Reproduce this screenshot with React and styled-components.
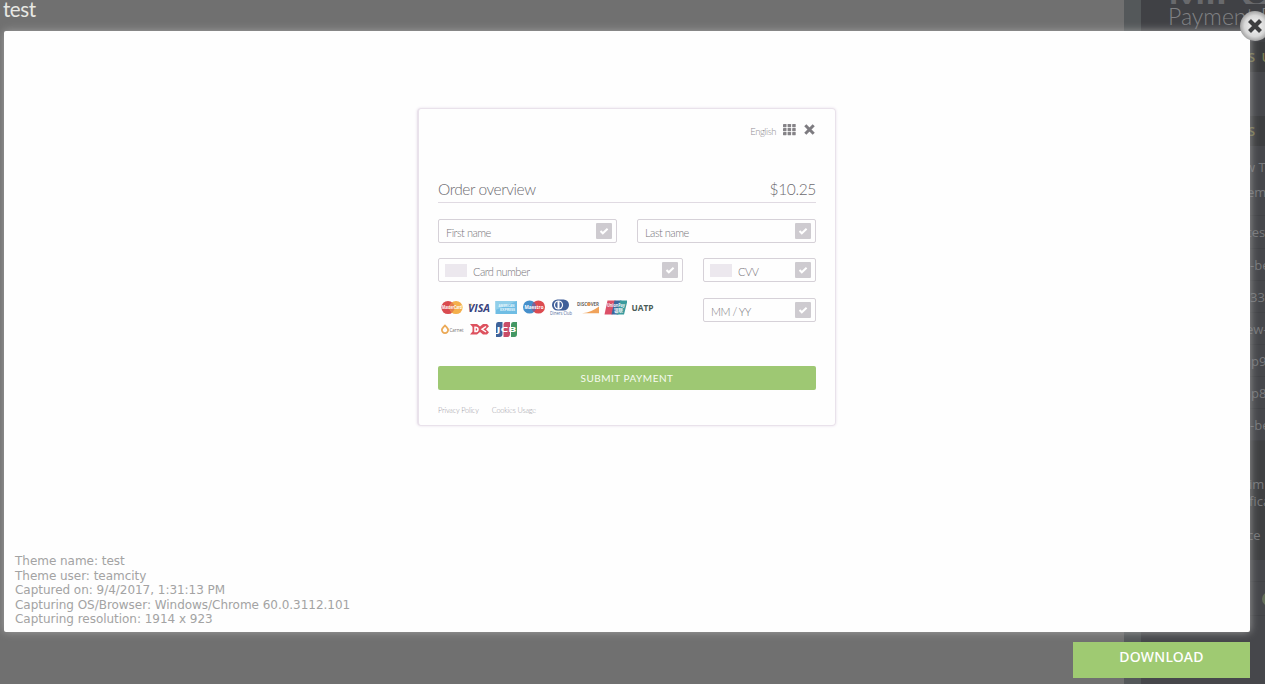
import React from "react";
import styled, { createGlobalStyle } from "styled-components";

const GlobalStyle = createGlobalStyle`
  * { box-sizing: border-box; }
  html, body { margin: 0; padding: 0; height: 684px; overflow: hidden; background: #707070; }
`;

const thin = '"Lato", "Open Sans", sans-serif';

const Page = styled.div`
  position: relative;
  display: flex;
  width: 1265px;
  height: 684px;
  overflow: hidden;
`;
const Backdrop = styled.div`
  flex: 1;
  background: #707070;
`;
const Gutter = styled.div`
  width: 17px;
  background: #54585a;
`;
const Sidebar = styled.aside`
  width: 124px;
  height: 684px;
  overflow: hidden;
  background: #46474b;
  color: #77787a;
  font: 13px/18px "Open Sans", sans-serif;
  white-space: nowrap;
`;
const Brand = styled.div`
  height: 42px;
  padding-left: 27px;
  background: #404145;
  font-family: ${thin};
  font-weight: 300;
`;
const BrandName = styled.div`
  height: 4px;
  display: flex;
  align-items: flex-end;
  font: 700 40px/22px "Lato", sans-serif;
  color: #68696c;
  overflow: hidden;
`;
const BrandLine = styled.div`
  font-size: 23px;
  line-height: 25px;
  color: #808184;
`;
const SideRow = styled.div`
  display: flex;
  align-items: center;
  height: ${(p) => p.$h}px;
  padding-left: ${(p) => p.$x ?? 107}px;
  background: ${(p) => p.$bg || "transparent"};
  color: ${(p) => (p.$accent ? "#7d7b50" : "inherit")};
  font-weight: ${(p) => (p.$accent ? 600 : 400)};
  word-spacing: ${(p) => (p.$accent ? "3px" : 0)};
  border-bottom: 1px solid ${(p) => (p.$line ? "#414246" : "transparent")};
`;
const Dot = styled.span`
  flex: none;
  width: 14px;
  height: 14px;
  border-radius: 50%;
  background: #65705a;
`;

const Title = styled.h1`
  position: absolute;
  left: 3px;
  top: -4px;
  margin: 0;
  font: 400 20.5px/26px ${thin};
  letter-spacing: -0.45px;
  color: #e8e8e4;
`;
const Lightbox = styled.section`
  position: absolute;
  left: 4px;
  top: 31px;
  width: 1246px;
  height: 601px;
  padding: 77px 10px 5px 413px;
  display: flex;
  flex-direction: column;
  justify-content: space-between;
  background: #fefefe;
  border-radius: 2px;
  box-shadow: 0 0 9px #a0a0a0;
`;
const CloseButton = styled.button`
  position: absolute;
  left: 1240px;
  top: 11px;
  width: 30px;
  height: 30px;
  padding: 0;
  border: 0;
  background: none;
  svg { display: block; }
`;
const Download = styled.button`
  position: absolute;
  left: 1073px;
  top: 642px;
  width: 177px;
  height: 36px;
  padding: 0 0 6px;
  border: 0;
  background: #9fca72;
  color: #fff;
  font: 500 14px/18px "Noto Sans", "Open Sans", sans-serif;
  letter-spacing: 0.25px;
`;

const Card = styled.form`
  width: 419px;
  height: 318px;
  padding: 0 19px;
  display: flex;
  flex-direction: column;
  border: 1px solid #e9e2eb;
  border-left-width: 2px;
  border-radius: 4px;
  box-shadow: 0 0 3px #e9e0ec;
  font-family: ${thin};
  font-weight: 300;
  color: #77757a;
`;
const Tools = styled.div`
  display: flex;
  justify-content: flex-end;
  align-items: center;
  gap: 7px;
  height: 41px;
  font-size: 9.5px;
  color: #8f8d92;
  svg { display: block; }
  span { padding-top: 3px; letter-spacing: -0.45px; }
`;
const Overview = styled.div`
  display: flex;
  justify-content: space-between;
  align-items: flex-end;
  height: 53px;
  margin-bottom: 16px;
  padding-bottom: 2px;
  border-bottom: 1px solid #e0dae2;
  font-size: 15.5px;
  line-height: 21px;
  color: #6d6b70;
`;
const OverviewLabel = styled.span`
  letter-spacing: -0.45px;
`;
const Amount = styled.span`
  letter-spacing: -0.35px;
`;
const Fields = styled.div`
  display: grid;
  grid-template-columns: ${(p) => p.$cols};
  column-gap: 20px;
  row-gap: 16px;
  margin-bottom: ${(p) => p.$mb || 0}px;
`;
const FieldBox = styled.label`
  display: flex;
  align-items: center;
  height: 24px;
  padding: 0 4px 0 ${(p) => (p.$swatch ? 6 : 7)}px;
  border: 1px solid #d6d1d8;
  border-radius: 2px;
  font-size: 11px;
  line-height: 14px;
  svg { margin-left: auto; }
`;
const Swatch = styled.span`
  width: 22px;
  height: 13px;
  margin-right: 6px;
  background: #ece8ee;
`;
const FieldText = styled.span`
  padding-top: 3px;
  letter-spacing: -0.5px;
`;
const Brands = styled.div`
  display: grid;
  grid-template-columns: repeat(8, 27.3px);
  grid-auto-rows: 21.5px;
  justify-items: center;
  height: 43px;
  svg { display: block; }
`;
const Submit = styled.button`
  height: 24px;
  margin-top: 25px;
  padding: 0 0 1px;
  flex-shrink: 0;
  border: 0;
  border-radius: 2px;
  background: #9ec873;
  color: #f7fbf1;
  font: 400 10px/14px ${thin};
  letter-spacing: 0.5px;
`;
const Legal = styled.div`
  display: flex;
  gap: 13px;
  margin-top: 16px;
  font-size: 7.3px;
  line-height: 10px;
  color: #9b999e;
  letter-spacing: -0.15px;
`;
const Info = styled.div`
  margin-left: -402px;
  font: 12px/14.6px "DejaVu Sans", sans-serif;
  letter-spacing: -0.03px;
  color: #a3a3a3;
`;

const Check = () => (
  <svg width="16" height="16" viewBox="0 0 16 16">
    <rect width="16" height="16" rx="1" fill="#cecbd0" />
    <path d="M4.5 8l2.3 2.3 4.8-4.6" fill="none" stroke="#fff" strokeWidth="2" />
  </svg>
);

const Field = ({ label, swatch }) => (
  <FieldBox $swatch={swatch}>
    {swatch && <Swatch />}
    <FieldText>{label}</FieldText>
    <Check />
  </FieldBox>
);

const T = ({ children, ...p }) => (
  <text textAnchor="middle" fontFamily="Open Sans, Noto Sans CJK SC, sans-serif" fontWeight="700" lengthAdjust="spacingAndGlyphs" {...p}>
    {children}
  </text>
);
const Logo = ({ children }) => (
  <svg width="24" height="18" viewBox="0 0 24 18">{children}</svg>
);

const Brandmarks = () => (
  <Brands>
    <Logo>
      <circle cx="8" cy="9.5" r="6.6" fill="#d94b50" />
      <circle cx="16" cy="9.5" r="6.6" fill="#f4b04c" />
      <path d="M12 4.2a6.6 6.6 0 0 1 0 10.6a6.6 6.6 0 0 1 0-10.6" fill="#e57e4c" />
      <T x="12" y="11.3" fontSize="5" textLength="20" fill="#fff">MasterCard</T>
    </Logo>
    <Logo>
      <path d="M1 5.8h4l1 3z" fill="#e5a24e" opacity=".7" />
      <T x="12" y="13.5" fontSize="10.5" textLength="22" fontStyle="italic" fill="#37437f">VISA</T>
    </Logo>
    <Logo>
      <rect x="1.5" y="3" width="21.5" height="13" fill="#6fbde4" />
      <path d="M1.5 3H23L1.500 12z" fill="#91cfea" />
      <T x="12.5" y="9.2" fontSize="4.2" textLength="16" fill="#e9f7fc">AMERICAN</T>
      <T x="13.5" y="13.3" fontSize="4.2" textLength="15" fill="#e9f7fc">EXPRESS</T>
    </Logo>
    <Logo>
      <circle cx="7.6" cy="9" r="6.6" fill="#458fcb" />
      <circle cx="16.4" cy="9" r="6.6" fill="#dc4b50" />
      <path d="M12 4.1a6.6 6.6 0 0 1 0 9.8a6.6 6.6 0 0 1 0-9.8" fill="#79649b" />
      <T x="12" y="10.8" fontSize="5" textLength="19" fill="#fff">Maestro</T>
    </Logo>
    <Logo>
      <rect x="3" y="1.5" width="17" height="11" rx="5.5" fill="#405f99" />
      <circle cx="9.5" cy="7" r="4.6" fill="#fff" />
      <path d="M8.5 3.5a3.7 3.7 0 0 0 0 7zM10.5 3.5a3.7 3.7 0 0 1 0 7z" fill="#405f99" />
      <T x="12" y="16.7" fontSize="4.5" fontWeight="400" textLength="22" fill="#536da0">Diners Club</T>
    </Logo>
    <Logo>
      <path d="M23 8.5v6.8H6c7-.7 12-3 17-6.8" fill="#f0a25a" />
      <T x="12" y="8.3" fontSize="5.5" textLength="22" fill="#6a6767">DISCOVER</T>
      <circle cx="12.8" cy="6.3" r="1.7" fill="#e99a55" />
    </Logo>
    <Logo>
      <path d="M4.5 2.5h8l-3.2 14H1.5z" fill="#dc5068" />
      <path d="M11.5 2.5h7l-3.2 14H8.5z" fill="#3b679d" />
      <path d="M17 2.5h7.5l-3.5 14h-7.500z" fill="#399b9e" />
      <T x="13" y="9.2" fontSize="5" textLength="18" fill="#f1f6fa">UnionPay</T>
      <T x="15.5" y="14" fontSize="5" textLength="9" fill="#f1f6fa">银联</T>
    </Logo>
    <Logo>
      <T x="11.5" y="12.8" fontSize="8" textLength="22" fill="#4a5b57">UATP</T>
    </Logo>
    <Logo>
      <path d="M5 5.5l2 2.200a3.100 3.100 0 1 1-4 0z" fill="none" stroke="#eba956" strokeWidth="1.8" />
      <T x="16.5" y="11.7" fontSize="5.5" fontWeight="400" textLength="14" fill="#75706e">Carnet</T>
    </Logo>
    <Logo>
      <path d="M3 4h7l3 2.5L16 4h4l2 2.2-3 3 3 3-2 2.3h-4l-3-2.5-3 2.5H3l2.500-3V7z" fill="#dd525f" />
      <path d="M8 7.300c4 0 4 4.200 0 4.200zM19 6.500l-4 2.800 4 2.700" fill="none" stroke="#fff" strokeWidth="1.5" />
    </Logo>
    <Logo>
      <path d="M4 2h4.500v12q0 3-3 3H2V4.500Q2 2 4 2" fill="#3e6299" />
      <path d="M11.500 2H16v12q0 3-2.500 3h-4V4.500Q9.500 2 11.500 2" fill="#c94c67" />
      <path d="M19 2h4v12q0 3-2.500 3H17V4.500Q17 2 19 2" fill="#439763" />
      <T x="12.5" y="12.2" fontSize="7.5" textLength="20" fill="#fff">JCB</T>
    </Logo>
  </Brands>
);

const PaymentCard = () => (
  <Card>
    <Tools>
      <span>English</span>
      <svg width="13" height="12" viewBox="0 0 13 12" fill="#858387">
        {[0, 4.6, 9.2].map((x) =>
          [0, 4, 8].map((y) => <rect key={x + "-" + y} x={x} y={y} width="3.5" height="3.2" rx=".4" />)
        )}
      </svg>
      <svg width="13" height="12" viewBox="0 0 13 12">
        <path d="M2.3 1.3l8.400 8.400M10.700 1.300l-8.400 8.400" stroke="#7d7b80" strokeWidth="3" />
      </svg>
    </Tools>
    <Overview>
      <OverviewLabel>Order overview</OverviewLabel>
      <Amount>$10.25</Amount>
    </Overview>
    <Fields $cols="179px 179px" $mb={15}>
      <Field label="First name" />
      <Field label="Last name" />
    </Fields>
    <Fields $cols="245px 113px">
      <Field label="Card number" swatch />
      <Field label="CVV" swatch />
      <Brandmarks />
      <Field label="MM / YY" />
    </Fields>
    <Submit type="button">SUBMIT PAYMENT</Submit>
    <Legal>
      <span>Privacy Policy</span>
      <span>Cookies Usage</span>
    </Legal>
  </Card>
);

export default function App() {
  return (
    <Page>
      <GlobalStyle />
      <Backdrop />
      <Gutter />
      <Sidebar>
        <Brand>
          <BrandName>MiPO</BrandName>
          <BrandLine>Payment P</BrandLine>
        </Brand>
        <SideRow $h={30} $bg="#3b3c3e" $accent>S U</SideRow>
        <SideRow $h={44} />
        <SideRow $h={30} $bg="#3d3e40" $accent>S</SideRow>
        <SideRow $h={12} />
        <SideRow $h={18} $x={104}>w T</SideRow>
        <SideRow $h={32} $x={106}>em</SideRow>
        <SideRow $h={8} $line />
        <SideRow $h={33} $line $x={106}>tes</SideRow>
        <SideRow $h={32} $line $x={109}>-be</SideRow>
        <SideRow $h={32} $line $x={109}>33</SideRow>
        <SideRow $h={32} $line $x={105}>ew-</SideRow>
        <SideRow $h={32} $line $x={102}>up9</SideRow>
        <SideRow $h={32} $line $x={102}>up8</SideRow>
        <SideRow $h={32} $line $x={109}>-be</SideRow>
        <SideRow $h={34} $bg="#3f4042" />
        <SideRow $h={18} $bg="#3f4042" $x={108}>im</SideRow>
        <SideRow $h={17} $bg="#3f4042" $x={108}>fica</SideRow>
        <SideRow $h={50} $bg="#3f4042" $x={106}>ce</SideRow>
        <SideRow $h={22} $line />
        <SideRow $h={34} $line $x={121}><Dot /></SideRow>
      </Sidebar>
      <Title>test</Title>
      <Lightbox>
        <PaymentCard />
        <Info>
          Theme name: test<br />
          Theme user: teamcity<br />
          Captured on: 9/4/2017, 1:31:13 PM<br />
          Capturing OS/Browser: Windows/Chrome 60.0.3112.101<br />
          Capturing resolution: 1914 x 923
        </Info>
      </Lightbox>
      <CloseButton aria-label="Close">
        <svg width="30" height="30" viewBox="0 0 30 30">
          <defs>
            <radialGradient id="closeFill">
              <stop offset="0" stopColor="#f5f5f5" />
              <stop offset=".7" stopColor="#d8d8d8" />
              <stop offset="1" stopColor="#a2a2a2" />
            </radialGradient>
          </defs>
          <circle cx="15" cy="15" r="15" fill="url(#closeFill)" />
          <path d="M9.5 9.5l11 11M20.5 9.5l-11 11" stroke="#3d3e40" strokeWidth="4.2" />
        </svg>
      </CloseButton>
      <Download>DOWNLOAD</Download>
    </Page>
  );
}
